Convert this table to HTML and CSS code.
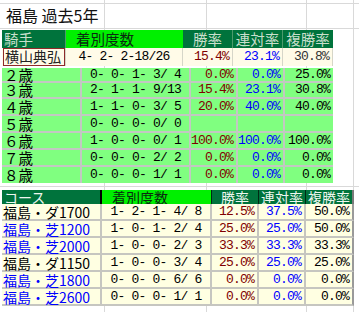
FILE: index.html
```html
<!DOCTYPE html>
<html lang="ja">
<head>
<meta charset="utf-8">
<title>福島 過去5年</title>
<link rel="stylesheet" href="styles.css">
</head>
<body>
<div class="title">福島 過去5年</div>
<div class="sheet">
  <div class="top-table">
    <div class="hd dark left">騎手</div>
    <div class="hd bright pad">着別度数</div>
    <div class="hd dark ctr">勝率</div>
    <div class="hd dark ctr">連対率</div>
    <div class="hd dark ctr last">複勝率</div>
    <div class="jc"><span class="jbox">横山典弘</span></div>
    <div class="jc num ctr">4- 2- 2-18/26</div>
    <div class="jc num rt red">15.4%</div>
    <div class="jc num rt blue">23.1%</div>
    <div class="jc num rt dim">30.8%</div>
  </div>

  <div class="age-table">
    <div class="ac lbl">２歳</div><div class="ac num ctr">0- 0- 1- 3/ 4</div><div class="ac num rt red">0.0%</div><div class="ac num rt blue">0.0%</div><div class="ac num rt last">25.0%</div>
    <div class="ac lbl">３歳</div><div class="ac num ctr">2- 1- 1- 9/13</div><div class="ac num rt red">15.4%</div><div class="ac num rt blue">23.1%</div><div class="ac num rt last">30.8%</div>
    <div class="ac lbl">４歳</div><div class="ac num ctr">1- 1- 0- 3/ 5</div><div class="ac num rt red">20.0%</div><div class="ac num rt blue">40.0%</div><div class="ac num rt last">40.0%</div>
    <div class="ac lbl">５歳</div><div class="ac num ctr">0- 0- 0- 0/ 0</div><div class="ac num rt red"></div><div class="ac num rt blue"></div><div class="ac num rt last"></div>
    <div class="ac lbl">６歳</div><div class="ac num ctr">1- 0- 0- 0/ 1</div><div class="ac num rt red">100.0%</div><div class="ac num rt blue">100.0%</div><div class="ac num rt last">100.0%</div>
    <div class="ac lbl">７歳</div><div class="ac num ctr">0- 0- 0- 2/ 2</div><div class="ac num rt red">0.0%</div><div class="ac num rt blue">0.0%</div><div class="ac num rt last">0.0%</div>
    <div class="ac lbl">８歳</div><div class="ac num ctr">0- 0- 0- 1/ 1</div><div class="ac num rt red">0.0%</div><div class="ac num rt blue">0.0%</div><div class="ac num rt last">0.0%</div>
  </div>

  <div class="course-table">
    <div class="ch dark left">コース</div>
    <div class="ch bright pad">着別度数</div>
    <div class="ch dark ctr">勝率</div>
    <div class="ch dark ctr">連対率</div>
    <div class="ch dark ctr last">複勝率</div>

    <div class="cc lbl">福島・ダ1700</div><div class="cc num ctr">1- 2- 1- 4/ 8</div><div class="cc num rt red">12.5%</div><div class="cc num rt blue">37.5%</div><div class="cc num rt last">50.0%</div>
    <div class="cc lbl blue">福島・芝1200</div><div class="cc num ctr">1- 0- 1- 2/ 4</div><div class="cc num rt red">25.0%</div><div class="cc num rt blue">25.0%</div><div class="cc num rt last">50.0%</div>
    <div class="cc lbl blue">福島・芝2000</div><div class="cc num ctr">1- 0- 0- 2/ 3</div><div class="cc num rt red">33.3%</div><div class="cc num rt blue">33.3%</div><div class="cc num rt last">33.3%</div>
    <div class="cc lbl">福島・ダ1150</div><div class="cc num ctr">1- 0- 0- 3/ 4</div><div class="cc num rt red">25.0%</div><div class="cc num rt blue">25.0%</div><div class="cc num rt last">25.0%</div>
    <div class="cc lbl blue">福島・芝1800</div><div class="cc num ctr">0- 0- 0- 6/ 6</div><div class="cc num rt red">0.0%</div><div class="cc num rt blue">0.0%</div><div class="cc num rt last">0.0%</div>
    <div class="cc lbl blue">福島・芝2600</div><div class="cc num ctr">0- 0- 0- 1/ 1</div><div class="cc num rt red">0.0%</div><div class="cc num rt blue">0.0%</div><div class="cc num rt last">0.0%</div>
  </div>
</div>
</body>
</html>
```

FILE: styles.css
```css
html, body {
  margin: 0;
  padding: 0;
}
body {
  width: 359px;
  height: 312px;
  overflow: hidden;
  font-family: "Noto Sans CJK JP", "Noto Sans", sans-serif;
  color: #000;
  background-color: #fff;
  background-image:
    linear-gradient(to bottom, transparent 3px, #d9d9d9 3px, #d9d9d9 4px, transparent 4px),
    linear-gradient(to bottom, transparent 28px, #d9d9d9 28px, #d9d9d9 29px, transparent 29px),
    linear-gradient(to bottom, transparent 186px, #d9d9d9 186px, #d9d9d9 187px, transparent 187px),
    linear-gradient(to right, transparent 104px, #d9d9d9 104px, #d9d9d9 105px, transparent 105px),
    linear-gradient(to right, transparent 206px, #d9d9d9 206px, #d9d9d9 207px, transparent 207px),
    linear-gradient(to right, transparent 306px, #d9d9d9 306px, #d9d9d9 307px, transparent 307px),
    linear-gradient(to right, transparent 353px, #d9d9d9 353px, #d9d9d9 354px, transparent 354px);
}

.title {
  height: 28px;
  line-height: 30px;
  padding-left: 6px;
  font-size: 16px;
  color: #111;
}

.sheet {
  margin-left: 2px;
}

.num {
  font-family: "Liberation Mono", "DejaVu Sans Mono", monospace;
  font-size: 13px;
  letter-spacing: -0.8px;
  white-space: pre;
}
.ctr { text-align: center; }
.rt { text-align: right; padding-right: 3px; }
.left { padding-left: 2px; }
.pad { padding-left: 10px; }
.red { color: #800000; }
.blue { color: #0000ff; }
.dim { color: #333; }

/* top table */
.top-table {
  margin-top: 2px;
  width: 331px;
  display: grid;
  grid-template-columns: 64px 117px 50px 50px 50px;
  grid-template-rows: 18px 18px;
}
.hd {
  font-size: 14.5px;
  line-height: 18px;
  box-sizing: border-box;
  white-space: nowrap;
}
.hd.dark {
  background: #00733c;
  color: #c9dfcc;
  border-right: 1px solid #4c9a6c;
}
.hd.bright {
  background: #00f000;
  color: #0a2a10;
}
.hd.last { border-right: none; }
.jc {
  background: #fffbe8;
  box-sizing: border-box;
  border-right: 1px solid #d6d6c8;
  line-height: 18px;
}
.jbox {
  display: block;
  margin-left: 1px;
  width: 62px;
  height: 18px;
  box-sizing: border-box;
  border: 1.5px solid #8e2a2a;
  font-size: 14px;
  line-height: 15px;
  padding-left: 1px;
  color: #222;
  white-space: nowrap;
}
.jc.rt { padding-right: 3px; }

/* age table */
.age-table {
  margin-top: 2px;
  width: 331px;
  display: grid;
  grid-template-columns: 80px 109px 47px 47px 48px;
  grid-template-rows: 15px 16px 17px 17px 17px 17px 16px;
}
.ac {
  background: #80ff80;
  box-sizing: border-box;
  border-right: 2px solid #c2c8c2;
  border-bottom: 2px solid #c2c8c2;
  display: flex;
  align-items: center;
  justify-content: flex-end;
  line-height: 14px;
}
.ac.ctr { justify-content: center; }
.ac.lbl {
  justify-content: flex-start;
  padding-left: 2px;
  font-size: 14.5px;
}
.ac.last { border-right: none; }
.age-table .ac:nth-last-child(-n+5) { border-bottom: none; }

/* course table */
.course-table {
  margin-top: 7px;
  width: 352px;
  display: grid;
  grid-template-columns: 100px 110px 47px 47px 48px;
  grid-template-rows: 14px repeat(6, 17px);
}
.ch {
  font-size: 14px;
  line-height: 14px;
  box-sizing: border-box;
  white-space: nowrap;
}
.ch.dark {
  background: #00733c;
  color: #eef6ef;
  border-right: 1px solid #002a14;
}
.ch.bright {
  background: #00f000;
  color: #0a2a10;
  border-right: 1px solid #002a14;
}
.ch.left { border-right: 2px solid #000; }
.ch.last { border-right: 2px solid #7a7a7a; }
.cc {
  background: #ffffe2;
  box-sizing: border-box;
  border-right: 2px solid #c6c6c0;
  border-bottom: 2px solid #c6c6c0;
  display: flex;
  align-items: center;
  justify-content: flex-end;
  line-height: 14px;
}
.cc.ctr { justify-content: center; }
.cc.lbl {
  justify-content: flex-start;
  padding-left: 1px;
  font-size: 14px;
  white-space: nowrap;
}
.cc.last { border-right: 2px solid #9a9a9a; }
```
